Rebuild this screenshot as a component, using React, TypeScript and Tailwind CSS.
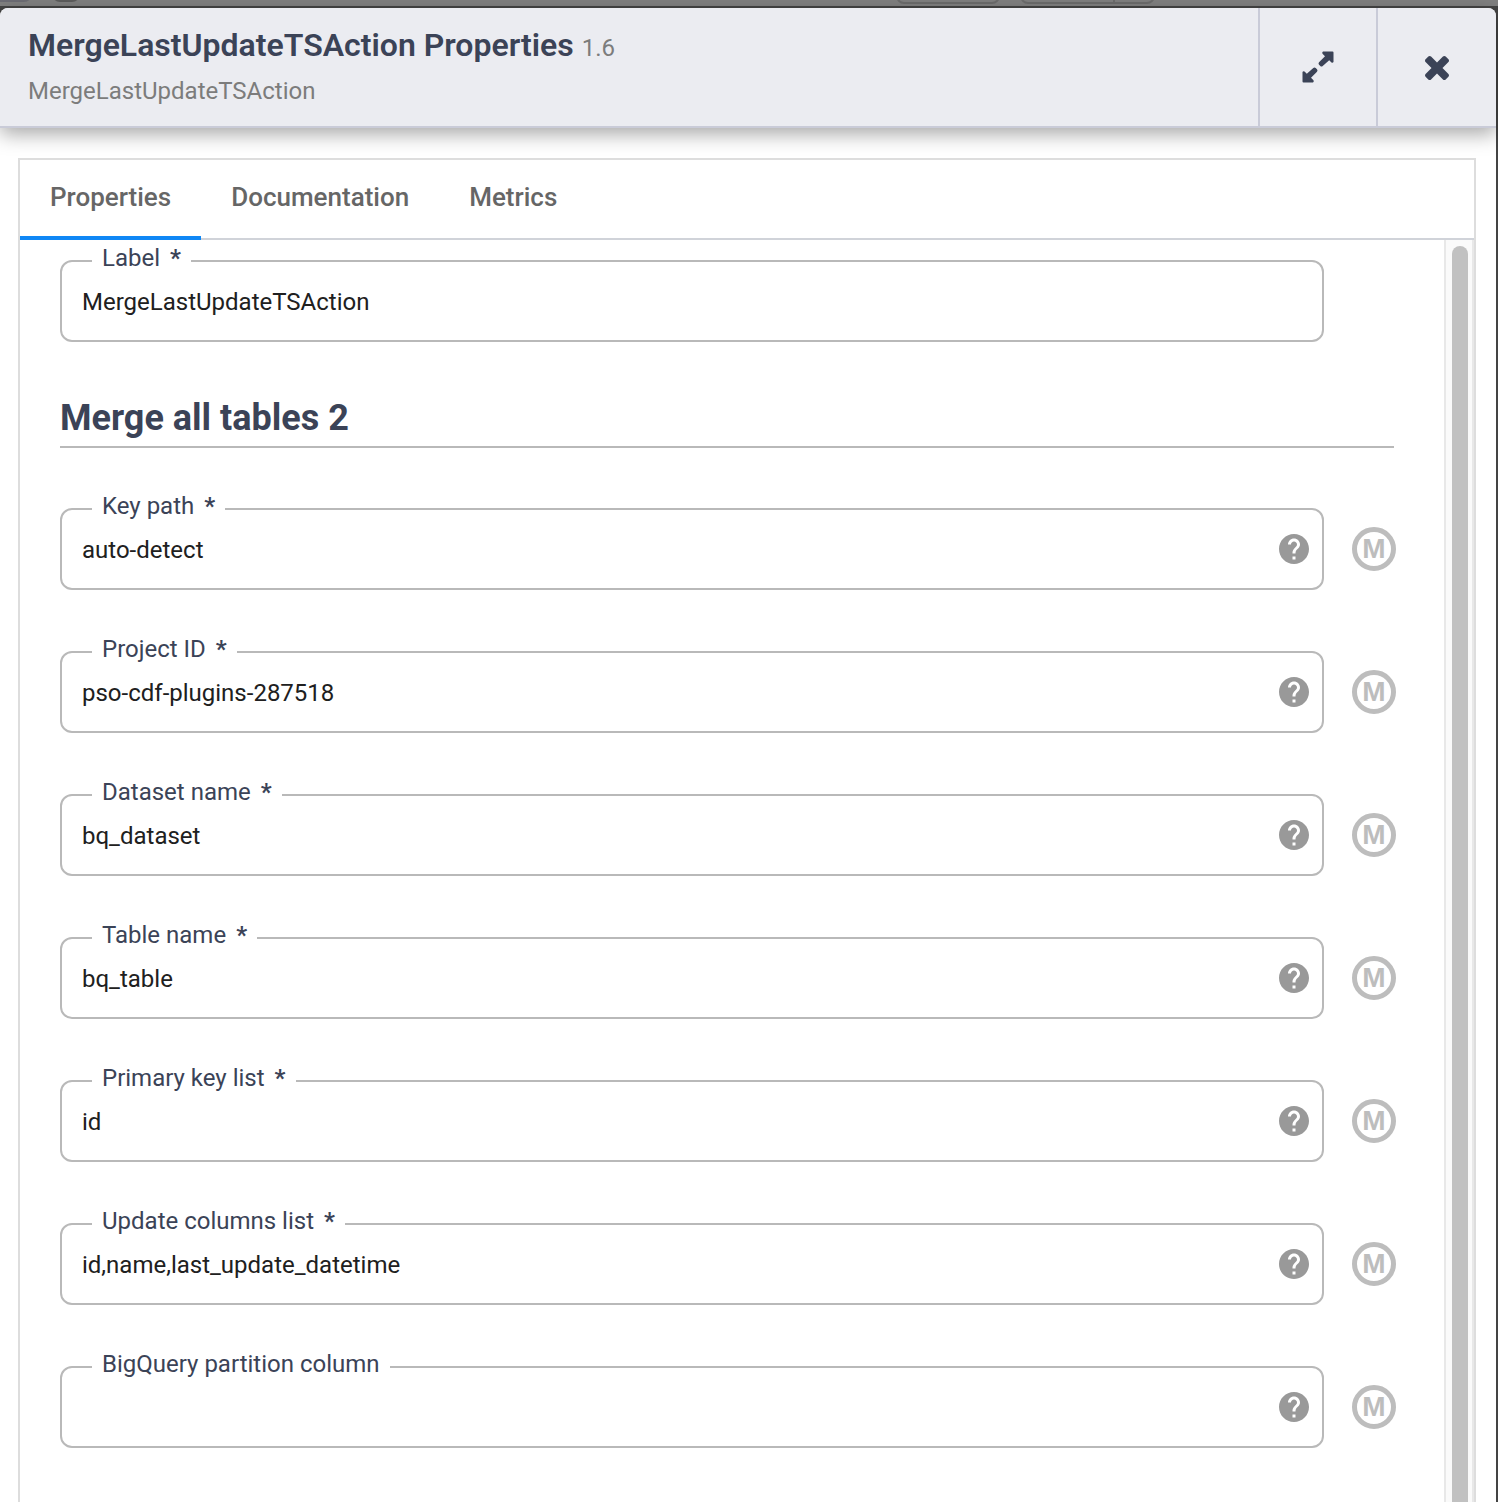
import React from "react";

type FieldData = { id: string; label: string; value: string; required?: boolean };

const fields: FieldData[] = [
  { id: "key-path", label: "Key path", value: "auto-detect", required: true },
  { id: "project-id", label: "Project ID", value: "pso-cdf-plugins-287518", required: true },
  { id: "dataset-name", label: "Dataset name", value: "bq_dataset", required: true },
  { id: "table-name", label: "Table name", value: "bq_table", required: true },
  { id: "primary-key-list", label: "Primary key list", value: "id", required: true },
  { id: "update-columns-list", label: "Update columns list", value: "id,name,last_update_datetime", required: true },
  { id: "partition-column", label: "BigQuery partition column", value: "" },
];

function ExpandIcon() {
  return (
    <svg className="size-8" viewBox="0 0 32 32" fill="currentColor" aria-hidden="true">
      <path d="M21 0.500H30.500Q31.500 0.500 31.500 1.500V11Q30.800 12.200 29.500 11.500L27.200 9.200L20.700 15Q19.400 16 18.300 15L17 13.700Q16 12.500 17 11.300L23 5.200L20.500 2.800Q19.700 1.200 21 0.500Z" />
      <path transform="rotate(180 16 16)" d="M21 0.500H30.500Q31.500 0.500 31.500 1.500V11Q30.800 12.200 29.500 11.500L27.200 9.200L20.700 15Q19.400 16 18.300 15L17 13.700Q16 12.500 17 11.300L23 5.200L20.500 2.800Q19.700 1.200 21 0.500Z" />
    </svg>
  );
}

function CloseIcon() {
  return (
    <svg className="size-6" viewBox="302 366 1188 1188" fill="currentColor" aria-hidden="true">
      <path d="M1490 1322q0 40-28 68l-136 136q-28 28-68 28t-68-28l-294-294-294 294q-28 28-68 28t-68-28l-136-136q-28-28-28-68t28-68l294-294-294-294q-28-28-28-68t28-68l136-136q28-28 68-28t68 28l294 294 294-294q28-28 68-28t68 28l136 136q28 28 28 68t-28 68l-294 294 294 294q28 28 28 68z" />
    </svg>
  );
}

function HelpIcon() {
  return (
    <svg className="size-9" viewBox="0 0 24 24" fill="currentColor" aria-hidden="true">
      <path d="M12 2C6.480 2 2 6.480 2 12s4.480 10 10 10 10-4.480 10-10S17.520 2 12 2zm1 17h-2v-2h2v2zm2.070-7.750l-.9.920C13.450 12.900 13 13.500 13 15h-2v-.5c0-1.100.45-2.100 1.170-2.830l1.240-1.260c.37-.36.59-.86.59-1.410 0-1.100-.9-2-2-2s-2 .9-2 2H8c0-2.210 1.790-4 4-4s4 1.790 4 4c0 .88-.36 1.680-.93 2.250z" />
    </svg>
  );
}

function OutlinedField({ field, help = false }: { field: FieldData; help?: boolean }) {
  return (
    <div className="relative min-w-0 flex-1">
      <div className="flex h-[82px] items-center rounded-xl border-2 border-[#b9b9b9] pr-2.5 pl-5">
        <input
          id={field.id}
          defaultValue={field.value}
          required={field.required}
          className="h-10 min-w-0 flex-1 bg-transparent pt-0.5 text-2xl text-[#202020] outline-none"
        />
        {help && (
          <button type="button" aria-label={`Help for ${field.label}`} className="text-[#999999]">
            <HelpIcon />
          </button>
        )}
      </div>
      <label
        htmlFor={field.id}
        className="absolute -top-[18px] left-8 flex h-8 items-center gap-2.5 bg-white px-2.5 text-2xl text-[#3b4357]"
      >
        {field.label}
        {field.required && (
          <span aria-hidden="true" className="font-bold">
            *
          </span>
        )}
      </label>
    </div>
  );
}

export default function App() {
  return (
    <div className="flex h-screen flex-col overflow-hidden bg-[#808080] font-[Roboto,sans-serif]">
      <div className="flex h-1.5 shrink-0 overflow-hidden" aria-hidden="true">
        <div className="-mt-4 h-[18px] w-8 rounded-br-lg bg-[#6c6c74]" />
        <div className="-mt-4 ml-5 h-[18px] w-7 rounded-lg bg-[#5c5c5c]" />
        <div className="-mt-8 ml-[816px] h-9 w-[104px] rounded-lg border-2 border-[#6c6c6c]" />
        <div className="-mt-8 ml-5 flex h-9 w-[135px] rounded-lg border-2 border-[#6c6c6c]">
          <div className="w-[93px] border-r-2 border-[#6c6c6c]" />
        </div>
      </div>
      <div className="flex min-h-0 flex-1 flex-col bg-[#444444] pt-0.5 pr-0.5">
        <main className="flex min-h-0 flex-1 flex-col rounded-t-lg bg-white">
          <header className="flex h-30 shrink-0 rounded-t-lg border-b-2 border-[#c9cbd8] bg-[#ebecf1] text-[#3b4357] shadow-[0_6px_20px_rgba(0,0,0,0.35)]">
            <div className="flex min-w-0 flex-1 flex-col pt-[17px] pl-7">
              <div className="flex items-baseline gap-2">
                <h1 className="text-[32px] leading-10 font-semibold">MergeLastUpdateTSAction Properties</h1>
                <span className="text-2xl text-[#7c7c7c]">1.6</span>
              </div>
              <p className="mt-2.5 text-2xl leading-8 text-[#7c7c7c]">MergeLastUpdateTSAction</p>
            </div>
            <button type="button" aria-label="Expand" className="flex w-[118px] items-center justify-center border-l-2 border-[#c9cbd8]">
              <ExpandIcon />
            </button>
            <button type="button" aria-label="Close" className="flex w-30 items-center justify-center border-l-2 border-[#c9cbd8] pt-0.5">
              <CloseIcon />
            </button>
          </header>

          <section className="mx-[18px] mr-5 mt-[30px] flex min-h-0 flex-1 flex-col border-2 border-b-0 border-[#dddddd]">
            <nav role="tablist" className="flex h-20 shrink-0 border-b-2 border-[#d0d3d9] text-[26px] font-medium text-[#666666]">
              <button type="button" role="tab" aria-selected="true" className="-mb-0.5 border-b-4 border-[#0f87f5] px-[30px] pb-0.5">
                Properties
              </button>
              <button type="button" role="tab" aria-selected="false" className="px-[30px] pb-1">
                Documentation
              </button>
              <button type="button" role="tab" aria-selected="false" className="px-[30px] pb-1">
                Metrics
              </button>
            </nav>
            <div className="flex min-h-0 flex-1">
              <div className="min-w-0 flex-1 pt-5 pr-[50px] pl-10">
                <div className="flex pr-[70px]">
                  <OutlinedField field={{ id: "label", label: "Label", value: "MergeLastUpdateTSAction", required: true }} />
                </div>
                <h2 className="mt-[52px] border-b-2 border-[#b9b9b9] pb-1 text-4xl leading-12 font-bold text-[#3b4357]">
                  Merge all tables 2
                </h2>
                <div className="mt-[60px] flex flex-col gap-[61px]">
                  {fields.map((field) => (
                    <div key={field.id} className="flex items-center gap-7">
                      <OutlinedField field={field} help />
                      <button
                        type="button"
                        aria-label={`Macro for ${field.label}`}
                        className="-mr-0.5 flex size-11 items-center justify-center rounded-full border-[5px] border-[#bdbdbd] font-['Liberation_Sans',sans-serif] text-[28px] leading-none font-bold text-[#bdbdbd]"
                      >
                        M
                      </button>
                    </div>
                  ))}
                </div>
              </div>
              <div className="w-[30px] border-x-2 border-[#e8e8e8] bg-[#fafafa] pt-1.5 pr-1 pl-1.5">
                <div className="h-full rounded-t-full bg-[#c1c1c1]" />
              </div>
            </div>
          </section>
        </main>
      </div>
    </div>
  );
}
